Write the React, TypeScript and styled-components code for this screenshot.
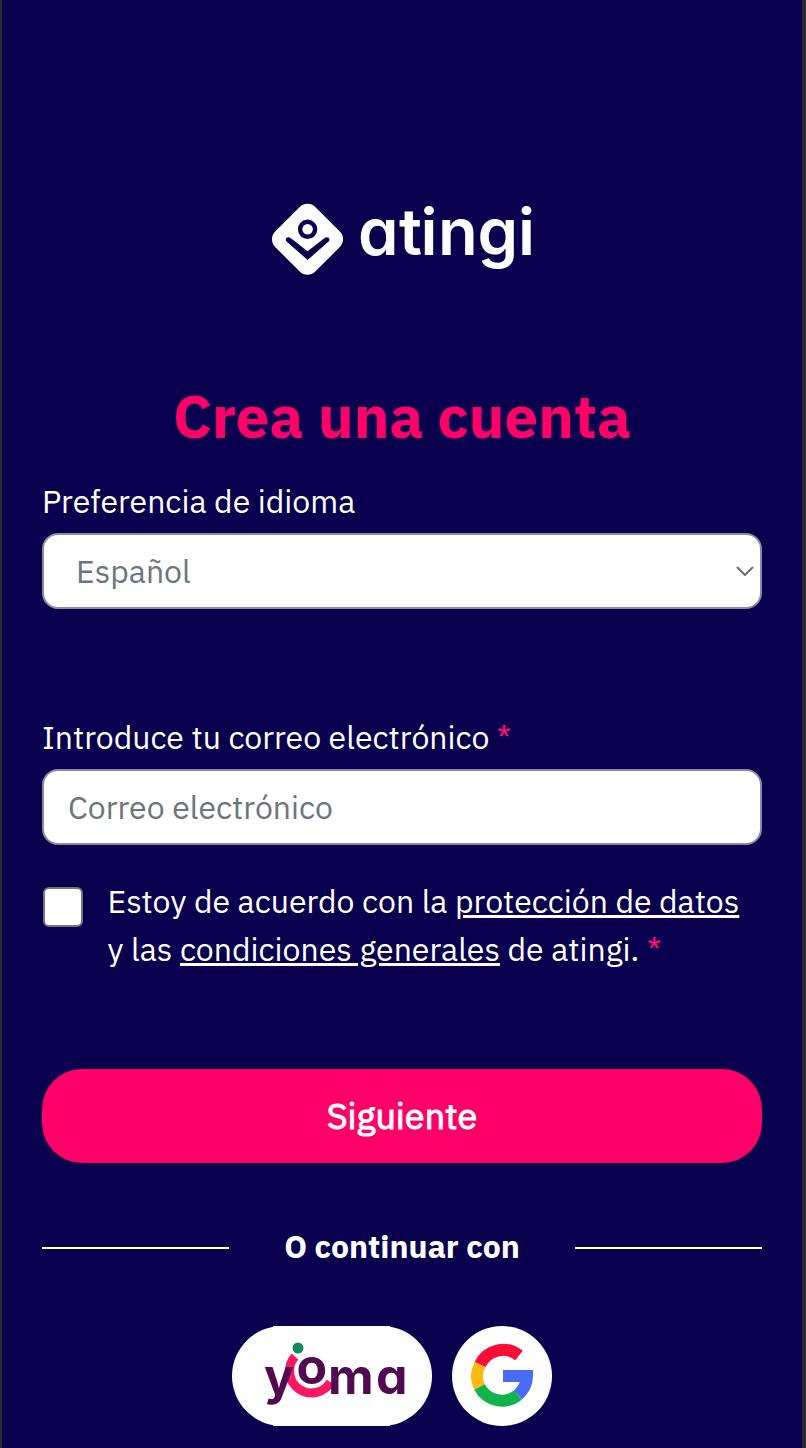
import React from 'react';
import styled, { createGlobalStyle } from 'styled-components';

const Global = createGlobalStyle`
  *, *::before, *::after { box-sizing: border-box; }
  body { margin: 0; background: #2a2a2a; font-family: "IBM Plex Sans", "Noto Sans", sans-serif; }
`;

const Page = styled.main`
  width: 800px;
  height: 1448px;
  margin-left: 2px;
  padding: 203px 40px 0;
  background: #09004e;
  color: #fff;
  display: flex;
  flex-direction: column;
  overflow: hidden;
`;

const Brand = styled.svg`
  display: block;
  flex: none;
  align-self: center;
  width: 260px;
  height: 74px;
  overflow: visible;
`;

const Title = styled.h1`
  margin: 99px 0 0;
  height: 80px;
  line-height: 80px;
  text-align: center;
  white-space: nowrap;
  color: #ff0069;
  font-size: 60px;
  font-weight: 700;
`;

const Field = styled.div<{ $top: number }>`
  display: flex;
  flex-direction: column;
  gap: 8px;
  margin-top: ${(p) => p.$top}px;
`;

const Label = styled.label`
  font-size: 32px;
  line-height: 48px;
  height: 48px;
  white-space: nowrap;
`;

const Required = styled.span`
  color: #ff0f76;
`;

const Control = styled.div<{ $inset: number }>`
  height: 76px;
  padding: 0 6px 0 ${(p) => p.$inset}px;
  display: flex;
  align-items: center;
  justify-content: space-between;
  background: #fff;
  border: 2px solid #8c88a5;
  border-radius: 16px;
  color: #6c757d;
  font-size: 32px;
`;

const TextInput = styled.input`
  flex: 1;
  min-width: 0;
  padding: 0;
  border: 0;
  outline: 0;
  background: transparent;
  font: inherit;
  &::placeholder { color: #6c757d; opacity: 1; }
`;

const Consent = styled.div`
  display: flex;
  gap: 24.5px;
  margin-top: 32px;
  padding-left: 1px;
`;

const Checkbox = styled.span`
  flex: none;
  width: 40px;
  height: 40px;
  margin-top: 10px;
  background: #fff;
  border: 2px solid #77737f;
  border-radius: 6px;
`;

const Terms = styled.p`
  margin: 0;
  display: flex;
  flex-direction: column;
`;

const TermsLine = styled.span`
  font-size: 32px;
  line-height: 48px;
  white-space: nowrap;
`;

const Link = styled.a`
  color: inherit;
  text-decoration: underline;
  text-decoration-thickness: 3px;
  text-underline-offset: 2px;
`;

const Submit = styled.button`
  flex: none;
  height: 94px;
  margin-top: 96px;
  padding: 0 0 1px;
  border: 0;
  border-radius: 40px;
  background: #ff0069;
  color: #fff;
  font-family: inherit;
  font-size: 36px;
  font-weight: 400;
  -webkit-text-stroke: 1px #fff;
`;

const Divider = styled.div`
  display: flex;
  align-items: center;
  justify-content: space-between;
  height: 48px;
  margin-top: 59px;
  font-size: 32px;
  font-weight: 700;
  white-space: nowrap;
`;

const Rule = styled.span`
  width: 187px;
  height: 2px;
  margin-top: 4px;
  background: #fff;
`;

const Providers = styled.div`
  display: flex;
  justify-content: center;
  gap: 20px;
  margin-top: 56px;
  padding-right: 20px;
`;

const ProviderLogo = styled.svg`
  display: block;
  height: 100px;
`;

const geometric = {
  fontFamily: 'Inter, sans-serif',
  fontFeatureSettings: '"cv11"',
};

export default function App() {
  return (
    <>
      <Global />
      <Page>
        <Brand viewBox="0 0 260 74" aria-label="atingi">
          <rect x="7.15" y="7.95" width="56.7" height="56.7" rx="11" transform="rotate(45 35.5 36.3)" fill="#fff" />
          <circle cx="35.6" cy="26.3" r="7.5" fill="none" stroke="#09004e" strokeWidth="4.4" />
          <path d="M14.6 34.7Q16.6 33.5 18.6 35L35.6 48.3L52.6 35Q54.6 33.5 56.6 34.7Q58.3 36.7 56.6 38.5L35.6 57L14.6 38.5Q12.9 36.7 14.6 34.7Z" fill="#09004e" />
          <text x="86 127 148.5 166 205.5 246" y="51.5" fill="#fff" fontSize="65" fontWeight="600" style={geometric}>atingi</text>
        </Brand>

        <Title>Crea una cuenta</Title>

        <Field $top={21}>
          <Label>Preferencia de idioma</Label>
          <Control $inset={32}>
            <span>Español</span>
            <svg width="18" height="12" viewBox="0 0 18 12" fill="none" stroke="#6d6b7a" strokeWidth="2" strokeLinecap="round" strokeLinejoin="round">
              <path d="M1.5 2.5L9 10L16.5 2.5" />
            </svg>
          </Control>
        </Field>

        <Field $top={104}>
          <Label htmlFor="email">Introduce tu correo electrónico <Required>*</Required></Label>
          <Control $inset={24}>
            <TextInput id="email" type="email" placeholder="Correo electrónico" />
          </Control>
        </Field>

        <Consent>
          <Checkbox role="checkbox" aria-checked="false" />
          <Terms>
            <TermsLine>Estoy de acuerdo con la <Link>protección de datos</Link></TermsLine>
            <TermsLine>y las <Link>condiciones generales</Link> de atingi. <Required>*</Required></TermsLine>
          </Terms>
        </Consent>

        <Submit>Siguiente</Submit>

        <Divider>
          <Rule />
          <span>O continuar con</span>
          <Rule />
        </Divider>

        <Providers>
          <ProviderLogo width="200" viewBox="0 0 200 100" aria-label="yoma">
            <rect width="200" height="100" rx="50" ry="50" fill="#fff" />
            <rect x="41" width="117" height="100" fill="#fff" />
            <path d="M63 30.5A22 22 0 1 0 98.6 56" fill="none" stroke="#ff175f" strokeWidth="9" />
            <circle cx="66" cy="22" r="5.5" fill="#138a65" />
            <circle cx="80" cy="44" r="17" fill="#fff" />
            <text x="32 64.5 96 144" y="67.5 58 67.5 67.5" fill="#510b50" fontSize="50" fontWeight="700" style={geometric}>yoma</text>
          </ProviderLogo>
          <ProviderLogo width="100" viewBox="0 0 100 100" aria-label="Google">
            <circle cx="50" cy="50" r="50" fill="#fff" />
            <g fill="none" strokeWidth="12">
              <path d="M67 29.5A25.5 25.5 0 0 0 28 38.5" stroke="#fb0b36" />
              <path d="M28 38.5A25.5 25.5 0 0 0 27.5 61" stroke="#fdb813" />
              <path d="M27.5 61A25.5 25.5 0 0 0 66 69" stroke="#12b34d" />
              <path d="M66 69Q74.7 61 75 50H51" stroke="#4a6cf5" />
            </g>
          </ProviderLogo>
        </Providers>
      </Page>
    </>
  );
}
